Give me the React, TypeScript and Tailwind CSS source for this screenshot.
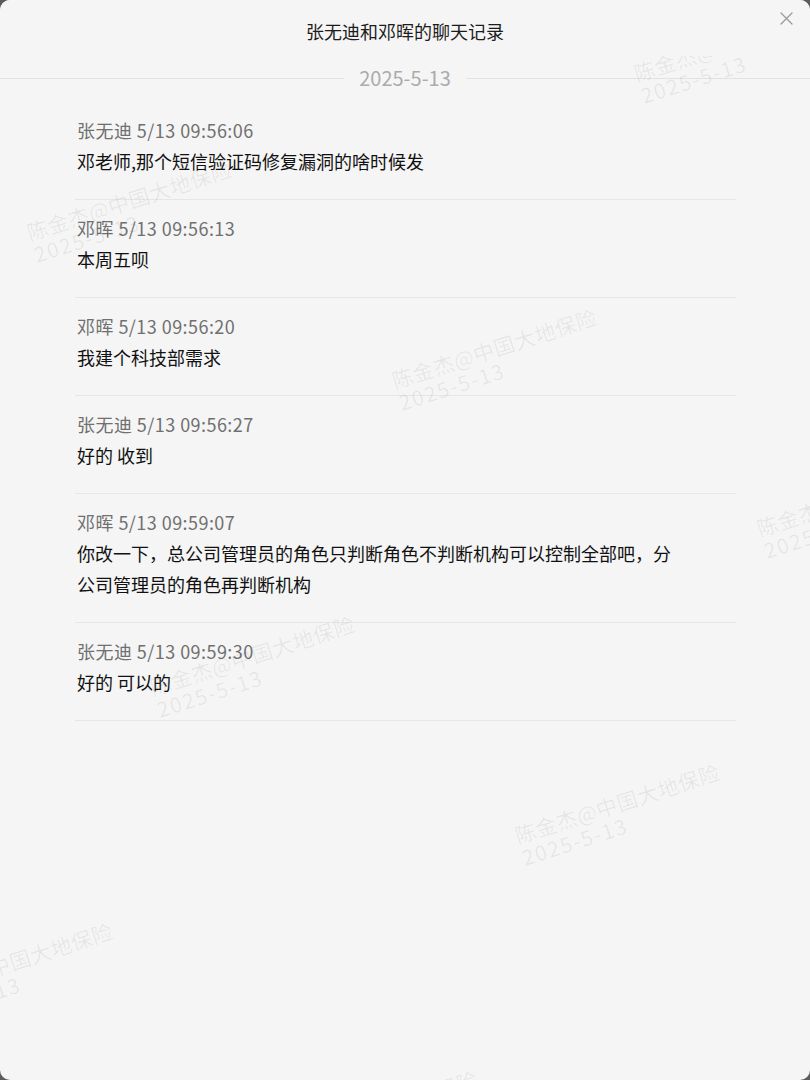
import React from 'react';

type Message = {
  sender: string;
  time: string;
  text: string;
};

const messages: Message[] = [
  { sender: '张无迪', time: '5/13 09:56:06', text: '邓老师,那个短信验证码修复漏洞的啥时候发' },
  { sender: '邓晖', time: '5/13 09:56:13', text: '本周五呗' },
  { sender: '邓晖', time: '5/13 09:56:20', text: '我建个科技部需求' },
  { sender: '张无迪', time: '5/13 09:56:27', text: '好的 收到' },
  {
    sender: '邓晖',
    time: '5/13 09:59:07',
    text: '你改一下，总公司管理员的角色只判断角色不判断机构可以控制全部吧，分公司管理员的角色再判断机构',
  },
  { sender: '张无迪', time: '5/13 09:59:30', text: '好的 可以的' },
];

// watermark tiles sit on a skewed lattice; positions are the bottom-left of the first line
const origin = { x: 30, y: 240 };
const stepA = { x: 365, y: 148 };
const stepB = { x: -242, y: 307 };

function watermarkSpots() {
  const spots: { left: number; top: number }[] = [];
  for (let m = -2; m <= 4; m++) {
    for (let n = -2; n <= 4; n++) {
      const bx = origin.x + m * stepA.x + n * stepB.x;
      const by = origin.y + m * stepA.y + n * stepB.y;
      if (bx < -260 || bx > 830 || by < 0 || by > 1200) continue;
      spots.push({ left: bx - 6, top: by - 19 - 55 });
    }
  }
  return spots;
}

function CloseIcon() {
  return (
    <svg width="13" height="13" viewBox="0 0 13 13" fill="none">
      <path d="M1 1L12 12M12 1L1 12" stroke="#9a9a9a" strokeWidth="1.3" strokeLinecap="round" />
    </svg>
  );
}

function MessageItem({ message }: { message: Message }) {
  return (
    <div className="border-b border-[#e6e6e6] pt-[16px] pb-[22px] pl-[2px]">
      <div className="text-[18px] leading-[24px] tracking-[0.45px] text-[#707070]">
        {message.sender} {message.time}
      </div>
      <div className="mt-[4px] max-w-[600px] text-[18px] leading-[31px] text-[#111]">{message.text}</div>
    </div>
  );
}

export default function App() {
  const spots = watermarkSpots();

  return (
    <div className="h-[1080px] w-[810px] bg-[#5c5c5c]" style={{ fontFamily: '"Noto Sans CJK SC", "Noto Sans", sans-serif' }}>
      <div className="relative flex h-full flex-col overflow-hidden rounded-[10px] bg-[#f5f5f5]">
        <div className="relative z-10 h-[56px] bg-[#f5f5f5] pt-[19px] text-center text-[18px] leading-[24px] text-[#1c1c1c]">
          张无迪和邓晖的聊天记录
        </div>
        <button className="absolute right-[17px] top-[12px] z-20">
          <CloseIcon />
        </button>

        <div className="relative flex-1">
          <div className="flex h-[44px] items-center">
            <div className="h-px flex-1 bg-[#e2e2e2]" />
            <span className="px-[15px] text-[20px] leading-[24px] text-[#ababab]">2025-5-13</span>
            <div className="h-px flex-1 bg-[#e2e2e2]" />
          </div>

          <div className="ml-[75px] mr-[74px] mt-[2px]">
            {messages.map((m, i) => (
              <MessageItem key={i} message={m} />
            ))}
          </div>

          <div className="pointer-events-none absolute inset-0 overflow-hidden">
            {spots.map((s, i) => (
              <div
                key={i}
                className="absolute origin-top-left -rotate-[17.7deg] whitespace-nowrap text-[21px] leading-[23px] tracking-[0.5px] text-[rgba(0,0,0,0.065)]"
                style={{ left: s.left, top: s.top }}
              >
                <div>陈金杰@中国大地保险</div>
                <div className="tracking-[1.5px]">2025-5-13</div>
              </div>
            ))}
          </div>
        </div>
      </div>
    </div>
  );
}
